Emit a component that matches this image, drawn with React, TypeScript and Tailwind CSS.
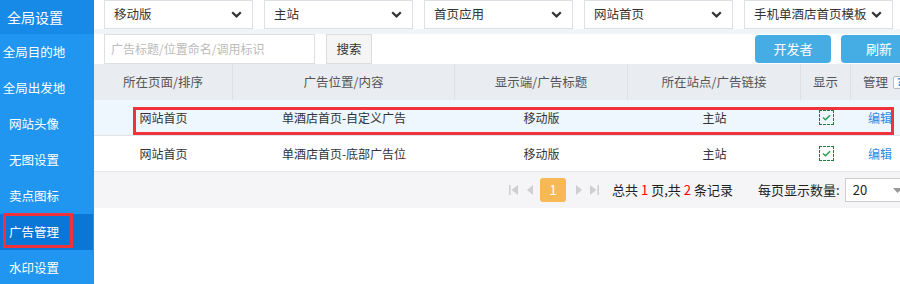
import React from "react";

const Chevron = () => (
  <svg width="11" height="7" viewBox="0 0 11 7" className="shrink-0">
    <polyline points="1.2,1.2 5.5,5.4 9.8,1.2" fill="none" stroke="#333" strokeWidth="2.2" />
  </svg>
);

const Select = ({ label }: { label: string }) => (
  <div className="w-[149px] h-[29px] bg-white border border-[#dcdfe3] flex items-center justify-between pl-[9px] pr-[10px] text-[12.5px] text-[#333]">
    <span className="whitespace-nowrap overflow-hidden">{label}</span>
    <Chevron />
  </div>
);

const Check = () => (
  <div className="w-[15px] h-[15px] border border-dashed border-[#1e7d3e] flex items-center justify-center">
    <svg width="9" height="7" viewBox="0 0 9 7">
      <polyline points="1,3.5 3.5,5.8 8,1.2" fill="none" stroke="#27a050" strokeWidth="1.5" />
    </svg>
  </div>
);

const cols = ["w-[139px]", "w-[222px]", "w-[173px]", "w-[173px]", "w-[50px]", "w-[58px]"];

const rows = [
  ["网站首页", "单酒店首页-自定义广告", "移动版", "主站"],
  ["网站首页", "单酒店首页-底部广告位", "移动版", "主站"],
];

export default function App() {
  const sideItems = ["全局目的地", "全局出发地", "网站头像", "无图设置", "卖点图标", "广告管理", "水印设置"];
  return (
    <div className="relative flex h-[284px] w-[900px] overflow-hidden bg-white font-['Noto_Sans_CJK_SC','Noto_Sans',sans-serif]">
      {/* Sidebar */}
      <div className="w-[94px] shrink-0 bg-[#2196f0] text-white">
        <div className="h-[34px] bg-[#168ae6] flex items-center">
          <span className="w-[70px] text-center text-[14px]">全局设置</span>
        </div>
        {sideItems.map((s) => (
          <div
            key={s}
            className={
              "h-[36px] flex items-center " + (s === "广告管理" ? "bg-[#0a77d6] w-[93px]" : "")
            }
          >
            <span className="w-[68px] text-center text-[12.5px]">{s}</span>
          </div>
        ))}
      </div>

      {/* Main */}
      <div className="flex-1 overflow-hidden">
        <div className="w-[830px]">
          <div className="h-[29px] flex gap-[11px] pl-[10px] bg-white">
            <Select label="移动版" />
            <Select label="主站" />
            <Select label="首页应用" />
            <Select label="网站首页" />
            <Select label="手机单酒店首页模板" />
          </div>
          <div className="h-[5px] bg-[#eff4f9]" />
          <div className="h-[30px] flex items-center pl-[10px] bg-white">
            <div className="w-[211px] h-[30px] border border-[#dcdfe3] flex items-center pl-[6px] text-[12px] text-[#bbbbbb] whitespace-nowrap">
              广告标题/位置命名/调用标识
            </div>
            <div className="ml-[11px] w-[46px] h-[30px] bg-[#f5f5f5] border border-[#dcdcdc] flex items-center justify-center text-[12.5px] text-[#333]">
              搜索
            </div>
            <div className="ml-[383px] w-[76px] h-[28px] rounded-[4px] bg-[#45ade4] flex items-center justify-center text-[13px] text-white">
              开发者
            </div>
            <div className="ml-[10px] w-[76px] h-[28px] rounded-[4px] bg-[#45ade4] flex items-center justify-center text-[13px] text-white">
              刷新
            </div>
          </div>

          {/* Table header */}
          <div className="h-[36px] flex bg-[#e9ecf0] text-[12.5px] text-[#555]">
            {["所在页面/排序", "广告位置/内容", "显示端/广告标题", "所在站点/广告链接", "显示"].map((h, i) => (
              <div key={h} className={cols[i] + " h-full flex items-center justify-center border-r border-[#dde0e4]"}>
                {h}
              </div>
            ))}
            <div className={cols[5] + " h-full flex items-center pl-[12px]"}>
              <span>管理</span>
              <span className="ml-[5px] w-[13px] h-[13px] border border-[#b8bcc2] bg-white rounded-[2px] flex items-center justify-center text-[10px] font-bold text-[#2d8ae6] leading-none">
                ?
              </span>
            </div>
          </div>

          {rows.map((r, ri) => (
            <div
              key={ri}
              className={"h-[36px] flex border-b border-[#e2e5e8] text-[12px] text-[#333] " + (ri === 0 ? "bg-[#eef6fe]" : "bg-white")}
            >
              {r.map((c, i) => (
                <div key={i} className={cols[i] + " h-full flex items-center justify-center"}>
                  {c}
                </div>
              ))}
              <div className={cols[4] + " h-full flex items-center justify-center"}>
                <Check />
              </div>
              <div className={cols[5] + " h-full flex items-center justify-center text-[#2d8ae6]"}>编辑</div>
            </div>
          ))}

          {/* Pagination */}
          <div className="h-[36px] flex items-center bg-[#f5f5f8] pl-[415px] text-[13px] text-[#222]">
            <svg width="9" height="10" viewBox="0 0 9 10">
              <rect x="0" y="0" width="1.6" height="10" fill="#cfcfcf" />
              <polygon points="9,0 2.5,5 9,10" fill="#cfcfcf" />
            </svg>
            <svg width="6" height="10" viewBox="0 0 6 10" className="ml-[9px]">
              <polygon points="6,0 0,5 6,10" fill="#cfcfcf" />
            </svg>
            <div className="ml-[7px] w-[26px] h-[24px] rounded-[3px] bg-[#f7b955] flex items-center justify-center text-white text-[13px]">
              1
            </div>
            <svg width="6" height="10" viewBox="0 0 6 10" className="ml-[10px]">
              <polygon points="0,0 6,5 0,10" fill="#cfcfcf" />
            </svg>
            <svg width="9" height="10" viewBox="0 0 9 10" className="ml-[8px]">
              <polygon points="0,0 6.5,5 0,10" fill="#cfcfcf" />
              <rect x="7.4" y="0" width="1.6" height="10" fill="#cfcfcf" />
            </svg>
            <span className="ml-[13px] whitespace-nowrap">
              总共<span className="text-[#ff0000] mx-[3px]">1</span>页,共<span className="text-[#ff0000] mx-[3px]">2</span>条记录
            </span>
            <span className="ml-[25px] whitespace-nowrap">每页显示数量:</span>
            <div className="ml-[5px] w-[62px] h-[24px] bg-white border border-[#cccccc] flex items-center justify-between pl-[7px] pr-[4px] text-[13px] text-[#222] shrink-0">
              <span>20</span>
              <svg width="9" height="5" viewBox="0 0 9 5">
                <polygon points="0,0 9,0 4.5,5" fill="#999" />
              </svg>
            </div>
          </div>
        </div>
      </div>

      {/* Red annotation boxes */}
      <div className="absolute left-[3px] top-[213px] w-[70px] h-[35px] border-[3px] border-[#f0323c] pointer-events-none" />
      <div className="absolute left-[133px] top-[107px] w-[761px] h-[28px] border-[3px] border-[#f0323c] pointer-events-none" />
    </div>
  );
}
